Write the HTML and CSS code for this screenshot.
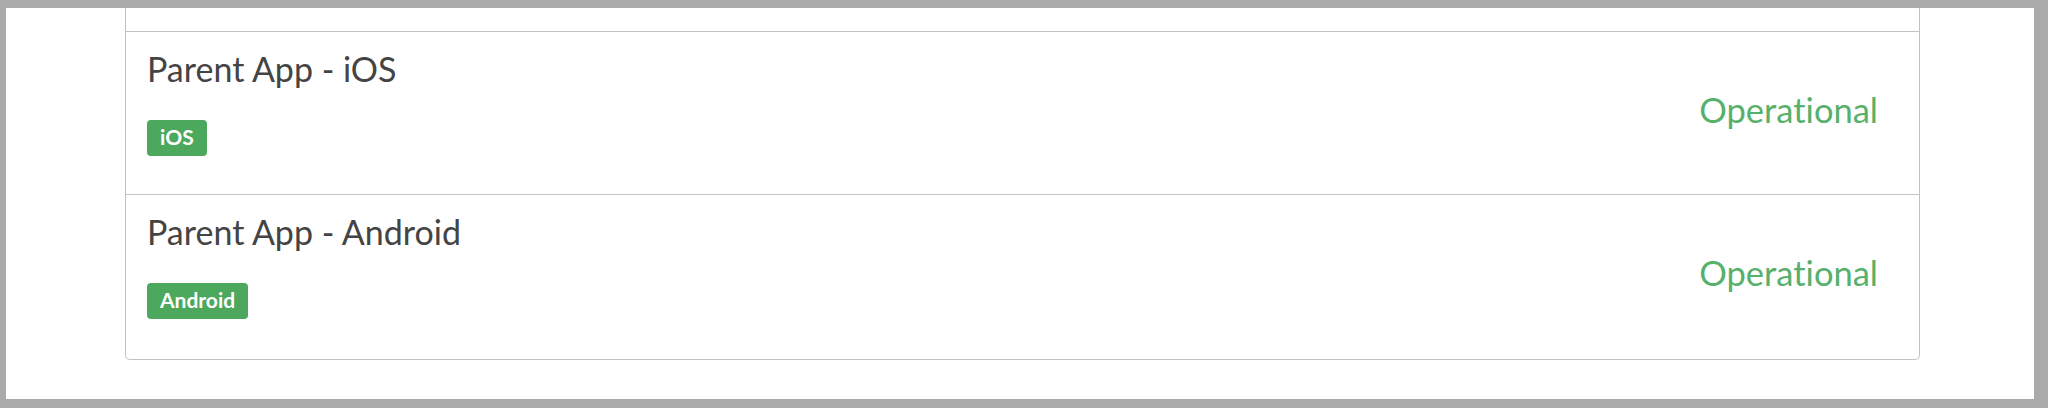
FILE: index.html
```html
<!DOCTYPE html>
<html lang="en">
<head>
<meta charset="utf-8">
<title>Status</title>
<link rel="stylesheet" href="styles.css">
</head>
<body>
<div class="page">
  <div class="card">
    <div class="card-top"></div>
    <div class="row">
      <div class="info">
        <div class="name">Parent App - iOS</div>
        <span class="badge">iOS</span>
      </div>
      <div class="status">Operational</div>
    </div>
    <div class="row row-last">
      <div class="info">
        <div class="name">Parent App - Android</div>
        <span class="badge">Android</span>
      </div>
      <div class="status">Operational</div>
    </div>
  </div>
</div>
</body>
</html>
```

FILE: styles.css
```css
html, body {
  margin: 0;
  padding: 0;
}
body {
  background: #aaaaaa;
  font-family: Lato, "Open Sans", sans-serif;
  font-variant-ligatures: none;
  height: 408px;
  overflow: hidden;
}
.page {
  background: #ffffff;
  margin: 8px 14px 0 6px;
  height: 391px;
  padding: 0 114px 0 119px;
  box-sizing: border-box;
}
.card {
  border: 1px solid #c2c2c2;
  border-top: none;
  border-radius: 0 0 5px 5px;
}
.card-top {
  height: 23px;
  border-bottom: 1px solid #c2c2c2;
}
.row {
  display: flex;
  align-items: center;
  justify-content: space-between;
  padding: 17px 41px 38px 21px;
  border-bottom: 1px solid #c2c2c2;
}
.row-last {
  border-bottom: none;
  padding-bottom: 40px;
}
.info {
  display: flex;
  flex-direction: column;
  align-items: flex-start;
}
.name {
  font-size: 34px;
  line-height: 40px;
  color: #444444;
  margin-bottom: 31px;
}
.badge {
  display: inline-block;
  background: #4ba85d;
  color: #ffffff;
  font-weight: 700;
  font-size: 21px;
  line-height: 26px;
  padding: 4px 13px 6px;
  border-radius: 4px;
}
.status {
  font-size: 34.5px;
  line-height: 42px;
  color: #57b06b;
  margin-top: 15px;
}
```
